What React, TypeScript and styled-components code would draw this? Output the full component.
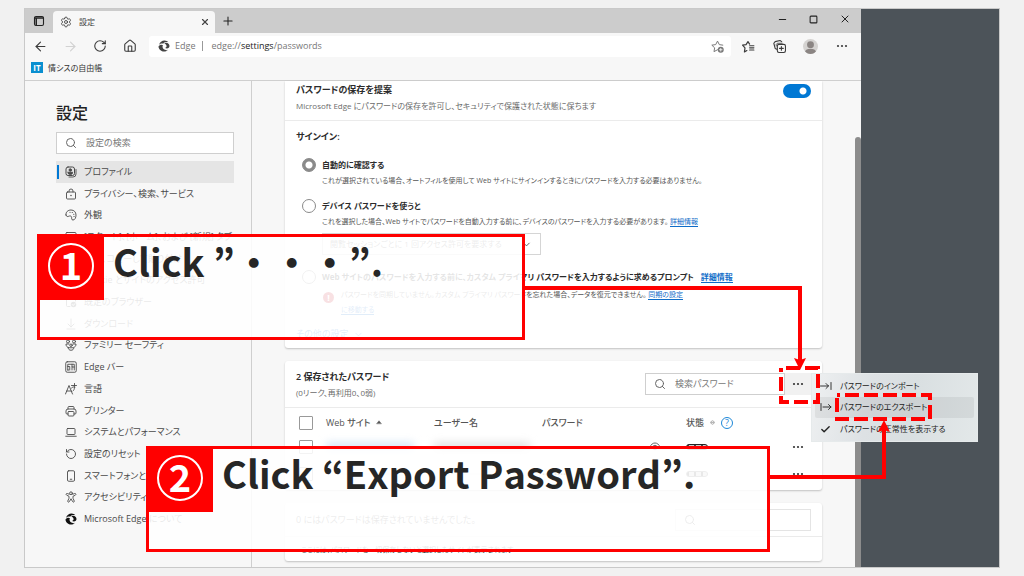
import React from "react";
import styled, { createGlobalStyle, css } from "styled-components";
import {
  ArrowLeft,
  ArrowRight,
  Check,
  ChevronDown,
  House,
  Minus,
  Plus,
  RotateCcw,
  RotateCw,
  Search,
  Settings,
  Square,
  X,
} from "lucide-react";

const GlobalStyle = createGlobalStyle`
  *, *::before, *::after { box-sizing: border-box; }
  body {
    margin: 0;
    background: #f1f1f1;
    color: #444;
    font: 9px/16px "Open Sans", "Noto Sans CJK JP", sans-serif;
    font-feature-settings: "palt";
  }
  button, input, select { font: inherit; font-feature-settings: inherit; color: inherit; }
  button { padding: 0; border: 0; background: none; }
  svg { display: block; flex: none; }
  h1, h2, p, ul { margin: 0; padding: 0; }
`;

const red = "#ff0000";

/* ---------- icons ---------- */

const Glyph = styled.svg.attrs({ viewBox: "0 0 24 24", "aria-hidden": true })<{ $size?: number }>`
  width: ${(p) => p.$size ?? 12}px;
  height: ${(p) => p.$size ?? 12}px;
  fill: none;
  stroke: currentColor;
  stroke-width: 1.8;
  stroke-linecap: round;
  stroke-linejoin: round;
`;

const EdgeLogo = ({ color = "#444" }: { color?: string }) => (
  <Glyph>
    <g fill={color} stroke="none">
      <path d="M2 10C3.500 4 8 1 13 1c3.500 0 6 1.500 7.500 3.500-5-1.500-9 0-10 3C7.500 6.500 4.500 7.500 2 10z" />
      <path d="M1 13c2-3.500 6-4.500 9-2.500C8 13 9 17.500 14 19.500c2 1 4 1 6 0C16 24 9 24.500 5 20.500 2.500 18.500 1 16 1 13z" />
      <path d="M12.500 6.500c5-3 10.500.5 10.500 5.500 0 4-4 6-9 4 3-1 4-3.500 2.500-6-1-1.800-2.500-2.800-4-3.500z" />
    </g>
  </Glyph>
);

const TabMenuIcon = () => (
  <Glyph>
    <rect x="3" y="3" width="18" height="18" rx="3" strokeWidth="2.200" />
    <path d="M3.500 6h17M6.500 8v12" strokeWidth="3" />
  </Glyph>
);

const StarAddIcon = () => (
  <Glyph $size={13}>
    <path d="M12 18l-6.500 3.500 1.300-7L1.500 9.500l7.200-1L12 2l3.300 6.500 6.500 1" />
    <circle cx="18" cy="18" r="5.500" fill="currentColor" stroke="none" />
    <path d="M18 15.500v5M15.500 18h5" stroke="#fff" strokeWidth="1.500" />
  </Glyph>
);

const FavoritesIcon = () => (
  <Glyph $size={13}>
    <path d="M9 19.500l-4.500 2.500 1-7.500L1 9.500l6.500-1L11 3l3 4.500" strokeWidth="2.200" />
    <path d="M14 10.500h8M14 14.500h8M14 18.500h8" strokeWidth="2" />
  </Glyph>
);

const CollectionsIcon = () => (
  <Glyph $size={13}>
    <path d="M7 17l-3-1.500L1.500 6 4 3l9-2 3 2" strokeWidth="2" />
    <path d="M6 11V8l2-2h9" strokeWidth="1.500" />
    <rect x="8" y="8" width="15" height="15" rx="3" strokeWidth="2" />
    <path d="M15.500 12v7M12 15.500h7" strokeWidth="2" />
  </Glyph>
);

const Dots = () => (
  <Glyph>
    <g fill="currentColor" stroke="none">
      <circle cx="4" cy="12" r="2.200" />
      <circle cx="12" cy="12" r="2.200" />
      <circle cx="20" cy="12" r="2.200" />
    </g>
  </Glyph>
);

const ProfileIcon = () => (
  <Glyph>
    <rect x="2" y="2" width="17" height="17" rx="4" strokeWidth="2" />
    <circle cx="10.500" cy="8" r="2.500" fill="currentColor" />
    <path d="M6 12.500h9v1.500a4.500 3 0 0 1-9 0z" fill="currentColor" />
    <path d="M22 7v9a6 6 0 0 1-6 6H8" />
  </Glyph>
);

const LockIcon = () => (
  <Glyph>
    <rect x="3" y="8" width="18" height="14" rx="2" />
    <path d="M8 8V6a4 4 0 0 1 8 0v2" />
    <circle cx="12" cy="15" r="1.500" fill="currentColor" stroke="none" />
  </Glyph>
);

const PaletteIcon = () => (
  <Glyph>
    <path d="M2 12C1 6 6 2 12 2c6 0 10 4 10 10 0 5-2 10-6 10-4 0-2-4-3-6.500-1-2-3.500-2-5.500-1C5 16 2.500 15 2 12z" />
    <path d="M10 6.500h.1M14.500 7h.1M17.500 10.500h.1M18 15h.1" strokeWidth="2.400" />
  </Glyph>
);

const StartIcon = () => (
  <Glyph>
    <rect x="2" y="3" width="20" height="18" rx="2" />
    <path d="M2 8h20M9 8v13" />
  </Glyph>
);

const ShareIcon = () => (
  <Glyph>
    <path d="M11 4H5a2 2 0 0 0-2 2v13a2 2 0 0 0 2 2h13a2 2 0 0 0 2-2v-4M8 15c1-5 5-7 9-7M14 3l6 5-6 5" />
  </Glyph>
);

const CookieIcon = () => (
  <Glyph>
    <rect x="2" y="3" width="20" height="18" rx="2" />
    <path d="M2 8h20M6 13h6M6 17h6M16 12v6" />
  </Glyph>
);

const BrowserIcon = () => (
  <Glyph>
    <path d="M10 21H5a2 2 0 0 1-2-2V5a2 2 0 0 1 2-2h14a2 2 0 0 1 2 2v5" />
    <circle cx="17" cy="17" r="5.500" fill="currentColor" stroke="none" />
    <path d="M14.500 17l2 2 3-3.500" stroke="#fff" />
  </Glyph>
);

const DownloadIcon = () => (
  <Glyph>
    <path d="M12 2v16M6 12l6 6 6-6M4 22h16" />
  </Glyph>
);

const FamilyIcon = () => (
  <Glyph>
    <circle cx="6" cy="5" r="3" />
    <circle cx="18" cy="5" r="3" />
    <circle cx="12" cy="12.500" r="2.500" />
    <path d="M8 10H2c0 4 1.500 6 4 6.500M16 10h6c0 4-1.500 6-4 6.500M6.500 17.500h11c0 3-2 5-5.500 5s-5.500-2-5.500-5z" />
  </Glyph>
);

const EdgeBarIcon = () => (
  <Glyph>
    <rect x="1.500" y="1.500" width="21" height="21" rx="3" />
    <path d="M5.500 18V6.500h13V18M9.500 18v-7h-4M14 6.500V12h4.500M14 12v6M5.500 18h2" />
  </Glyph>
);

const LanguageIcon = () => (
  <Glyph>
    <path d="M1 22L8 5l7 17M3.500 16h9M13 5h10M19 1v6c0 5-1 8-3 9M13 10c2-2 5-3 7-2" />
  </Glyph>
);

const PrinterIcon = () => (
  <Glyph>
    <path d="M6 8V5a2 2 0 0 1 2-2h8a2 2 0 0 1 2 2v3M6 18H4a2 2 0 0 1-2-2v-4a4 4 0 0 1 4-4h12a4 4 0 0 1 4 4v4a2 2 0 0 1-2 2h-2" />
    <rect x="6" y="13" width="12" height="9" rx="2" />
  </Glyph>
);

const LaptopIcon = () => (
  <Glyph>
    <rect x="4" y="5" width="16" height="12" rx="1.500" />
    <path d="M1.500 20.500h21" />
  </Glyph>
);

const PhoneIcon = () => (
  <Glyph>
    <rect x="5" y="1.500" width="14" height="21" rx="2.500" />
    <path d="M10.500 18.500h3" />
  </Glyph>
);

const AccessibilityIcon = () => (
  <Glyph>
    <circle cx="12" cy="4.500" r="2.800" />
    <path d="M8.500 6.500L4.500 5C2 4.500 1.500 7.500 3.500 8.500L8 10.500v4L5.500 20c-.5 2.500 2.500 3 3.300 1.200L12 15.500l3.200 5.700c.8 1.800 3.800 1.300 3.300-1.200L16 14.500v-4l4.500-2c2-1 1.500-4-1-3.500l-4 1.500" />
  </Glyph>
);

const EyeIcon = () => (
  <Glyph>
    <path d="M2 12C4 6.500 8 4 12 4s8 2.500 10 8" />
    <circle cx="12" cy="13" r="4.500" />
  </Glyph>
);

const ImportIcon = () => (
  <Glyph>
    <path d="M1 12h16M12 7l5 5-5 5M22 5v14" />
  </Glyph>
);

const ExportIcon = () => (
  <Glyph>
    <path d="M2 5v14M6 12h16M17 7l5 5-5 5" />
  </Glyph>
);

/* ---------- page frame ---------- */

const Page = styled.div`
  position: relative;
  min-height: 100vh;
  padding: 8px 24px;
  display: flex;
`;

const Frame = styled.div`
  flex: 1;
  min-width: 0;
  display: grid;
  grid-template-columns: minmax(0, 1fr) 138px;
  border: 1px solid #c9c9c9;
`;

const Desktop = styled.div`
  background: #4c5359;
`;

const BrowserWindow = styled.div`
  min-width: 0;
  display: flex;
  flex-direction: column;
  background: #f7f7f7;
`;

/* ---------- browser chrome ---------- */

const TabStrip = styled.div`
  height: 24px;
  display: flex;
  align-items: stretch;
  background: #cccccc;
`;

const TabStripButton = styled.button<{ $width: number }>`
  width: ${(p) => p.$width}px;
  display: grid;
  place-items: center;
  color: #222;
`;

const Tab = styled.div`
  width: 162px;
  margin-top: 2px;
  padding: 0 5px 0 7px;
  display: flex;
  align-items: center;
  gap: 7px;
  background: #f7f7f7;
  border-radius: 4px 4px 0 0;
  font-size: 8px;
`;

const TabTitle = styled.span`
  flex: 1;
`;

const WindowButtons = styled.div`
  margin-left: auto;
  padding: 0 1px 4px 0;
  display: flex;
  align-items: stretch;
`;

const Toolbar = styled.div`
  height: 26px;
  display: flex;
  align-items: center;
  color: #444;
`;

const ToolButton = styled.button<{ $dim?: boolean }>`
  width: 30px;
  height: 22px;
  display: grid;
  place-items: center;
  color: ${(p) => (p.$dim ? "#d2d2d2" : "#3c3c3c")};
`;

const NavButtons = styled.div`
  display: flex;
  margin-right: 4px;
`;

const Actions = styled.div`
  width: 130px;
  padding: 0 4px 0 2px;
  display: grid;
  grid-auto-flow: column;
  justify-items: center;
`;

const AddressBar = styled.div`
  flex: 1;
  min-width: 0;
  height: 21px;
  padding: 0 7px 0 9px;
  display: flex;
  align-items: center;
  background: #fff;
  border-radius: 3px;
  color: #777;
`;

const SiteName = styled.span`
  margin-left: 5px;
  padding-right: 7px;
  line-height: 10px;
  border-right: 1px solid #999;
`;

const Url = styled.div`
  flex: 1;
  padding-left: 8px;
  white-space: nowrap;
`;

const UrlHost = styled.span`
  color: #222;
`;

const Avatar = styled.span`
  width: 15px;
  height: 15px;
  border-radius: 50%;
  overflow: hidden;
  background: #d5d3d1;
  color: #8b8583;
`;

const Bookmarks = styled.nav`
  height: 22px;
  padding: 0 6px 4px;
  display: flex;
  align-items: center;
  border-bottom: 1px solid #cfcfcf;
`;

const Bookmark = styled.a`
  display: flex;
  align-items: center;
  gap: 5px;
  color: #333;
  font-size: 8px;
  text-decoration: none;
`;

const SiteBadge = styled.span`
  width: 12px;
  height: 11px;
  background: #0a8fd0;
  color: #fff;
  font: 700 8px/11px "Open Sans", sans-serif;
  text-align: center;
`;

/* ---------- settings layout ---------- */

const Content = styled.div`
  flex: 1;
  display: grid;
  grid-template-columns: 227px minmax(0, 1fr) 6px;
`;

const Sidebar = styled.aside`
  padding: 21px 17px 0 31px;
  border-right: 1px solid #cfcfcf;
`;

const SidebarTitle = styled.h1`
  color: #222;
  font-size: 16px;
  font-weight: 500;
  line-height: 22px;
`;

const SearchBox = styled.label<{ $width?: number; $faint?: boolean }>`
  width: ${(p) => (p.$width ? `${p.$width}px` : "auto")};
  height: 22px;
  padding: 0 8px;
  display: flex;
  align-items: center;
  gap: 9px;
  background: #fff;
  border: 1px solid ${(p) => (p.$faint ? "#e4e4e4" : "#cfcfcf")};
  color: #666;
`;

const SearchInput = styled.input`
  flex: 1;
  min-width: 0;
  padding: 0;
  border: 0;
  outline: 0;
  background: none;
  line-height: 16px;
  &::placeholder {
    color: #777;
    opacity: 1;
  }
`;

const SidebarSearch = styled.div`
  margin: 8px 0 7px;
`;

const SideNav = styled.nav`
  height: 369px;
  display: grid;
  grid-auto-rows: 1fr;
`;

const SideLink = styled.a<{ $active?: boolean }>`
  display: flex;
  align-items: center;
  gap: 7px;
  padding-left: 6px;
  border-left: 3px solid transparent;
  color: #4a4a4a;
  text-decoration: none;
  white-space: nowrap;
  overflow: hidden;
  ${(p) =>
    p.$active &&
    css`
      background: linear-gradient(#0078d4, #0078d4) 1px 50% / 2px 14px no-repeat border-box, #e5e5e5;
    `}
`;

const Main = styled.main`
  padding: 0 33px 6px;
  display: flex;
  flex-direction: column;
  gap: 13px;
`;

const ScrollThumb = styled.div`
  margin-top: 56px;
  background: #8c8c8c;
  border-radius: 3px 3px 0 0;
`;

const Card = styled.section<{ $clipped?: boolean }>`
  background: #fff;
  border-radius: ${(p) => (p.$clipped ? "0 0 3px 3px" : "3px")};
  box-shadow: 0 1px 2px rgba(0, 0, 0, 0.22);
`;

const CardHead = styled.div<{ $height: number; $raised?: boolean }>`
  height: ${(p) => p.$height}px;
  padding: 0 11px ${(p) => (p.$raised ? 6 : 0)}px;
  display: flex;
  align-items: center;
  justify-content: space-between;
  border-bottom: 1px solid #ebebeb;
`;

const HeadText = styled.div`
  flex: 1;
`;

const Title = styled.h2<{ $light?: boolean }>`
  color: ${(p) => (p.$light ? "#666" : "#2b2b2b")};
  font-size: 9px;
  font-weight: ${(p) => (p.$light ? 400 : 600)};
  line-height: 16px;
  white-space: nowrap;
`;

const Note = styled.p<{ $small?: boolean }>`
  color: ${(p) => (p.$small ? "#555" : "#6b6b6b")};
  font-size: ${(p) => (p.$small ? 7 : 8)}px;
  line-height: 15px;
  white-space: nowrap;
`;

const Link = styled.a`
  color: #0f6cc8;
  text-decoration: none;
  border-bottom: 1px solid #0f6cc8;
`;

const Switch = styled.input.attrs({ type: "checkbox", role: "switch" })`
  appearance: none;
  width: 28px;
  height: 14px;
  margin: 0 0 14px;
  border-radius: 7px;
  background: radial-gradient(circle at 20px 7px, #fff 3px, transparent 4px), #0078d4;
`;

const SignIn = styled.div`
  padding: 8px 11px 6px;
  display: flex;
  flex-direction: column;
`;

const Option = styled.div<{ $gap: number }>`
  margin-top: ${(p) => p.$gap}px;
  padding-left: 6px;
  display: grid;
  grid-template-columns: 14px minmax(0, 1fr);
  column-gap: 6px;
`;

const Radio = styled.input.attrs({ type: "radio" })`
  appearance: none;
  width: 14px;
  height: 14px;
  margin: 1px 0;
  border: 1px solid #8a8a8a;
  border-radius: 50%;
  background: #fff;
  &:checked {
    border-color: #8a8a8a;
    background: radial-gradient(circle, #fff 3px, #8a8a8a 4px);
  }
`;

const OptionTitle = styled.label`
  color: #2b2b2b;
  font-size: 8px;
  font-weight: 700;
  white-space: nowrap;
`;

const OptionBody = styled.div`
  grid-column: 2;
`;

const LinkGap = styled.span`
  margin-left: 7px;
`;

const SelectWrap = styled.div`
  width: 219px;
  margin-top: 4px;
  display: grid;
  grid-template-columns: 1fr 19px;
  align-items: center;
  border: 1px solid #d5d5d5;
  background: #fff;
`;

const Select = styled.select`
  grid-area: 1 / 1 / 2 / 3;
  appearance: none;
  width: 100%;
  height: 20px;
  padding: 0 7px;
  border: 0;
  background: none;
  color: #666;
  font-size: 8px;
`;

const SelectArrow = styled.span`
  grid-area: 1 / 2;
  pointer-events: none;
`;

const Warning = styled.div`
  padding: 2px 0 0 1px;
  display: grid;
  grid-template-columns: 11px 1fr;
  gap: 7px;
`;

const WarningMark = styled.span`
  width: 11px;
  height: 11px;
  margin-top: 5px;
  border-radius: 50%;
  background: #c50f1f;
  color: #fff;
  font-weight: 700;
  line-height: 11px;
  text-align: center;
`;

const MoreSettings = styled.button`
  margin-top: 9px;
  display: flex;
  align-items: center;
  gap: 5px;
  color: #0f6cc8;
`;

const MoreButton = styled.button<{ $filled?: boolean }>`
  width: 26px;
  height: 22px;
  display: grid;
  place-items: center;
  background: ${(p) => (p.$filled ? "#f1f1f1" : "none")};
  color: #333;
`;

const Table = styled.table`
  width: 100%;
  table-layout: fixed;
  border-collapse: collapse;
  color: #555;
`;

const HeadCell = styled.th<{ $width?: number }>`
  width: ${(p) => (p.$width ? `${p.$width}px` : "auto")};
  height: 25px;
  padding: 4px 0 0;
  font-weight: 500;
  text-align: left;
  white-space: nowrap;
`;

const Cell = styled.td`
  height: 27px;
  padding: 0;
  white-space: nowrap;
`;

const TableWrap = styled.div`
  padding-bottom: 3px;
`;

const CheckBox = styled.input.attrs({ type: "checkbox" })`
  appearance: none;
  display: block;
  width: 14px;
  height: 14px;
  margin: 0 0 0 14px;
  border: 1px solid #999;
  border-radius: 1px;
  background: #fff;
`;

const Inline = styled.span<{ $gap: number }>`
  display: flex;
  align-items: center;
  gap: ${(p) => p.$gap}px;
`;

const Help = styled.button`
  width: 12px;
  height: 12px;
  border: 1px solid #1e88d8;
  border-radius: 50%;
  color: #1e88d8;
  font-size: 9px;
  line-height: 10px;
`;

const Smudge = styled.span<{ $color: string; $width: number }>`
  display: block;
  width: ${(p) => p.$width}px;
  height: 8px;
  background: ${(p) => p.$color};
  filter: blur(4px);
`;

const Masked = styled.span`
  display: block;
  width: 88px;
  font-size: 8px;
`;

const Strength = styled.span<{ $dark?: boolean }>`
  width: 22px;
  height: 6px;
  display: block;
  border: 1px solid ${(p) => (p.$dark ? "#222" : "#777")};
  border-radius: 3px;
  background: repeating-linear-gradient(90deg, #444 0 2px, #ccc 2px 7px);
`;

const EmptyNote = styled.p`
  padding: 4px 16px 3px;
  color: #333;
  font-size: 7px;
  line-height: 17px;
`;

/* ---------- drop-down menu ---------- */

const Menu = styled.ul`
  position: absolute;
  top: 373px;
  right: 46px;
  width: 167px;
  height: 69px;
  padding: 1px 3px;
  display: grid;
  grid-auto-rows: 1fr;
  list-style: none;
  background: linear-gradient(100deg, #eef0f1 0, #dde1e4 35%, #d9dfe1 60%, #e3e8e9 100%);
  border: 1px solid #e6eaeb;
`;

const MenuItem = styled.button<{ $active?: boolean }>`
  width: 100%;
  height: 100%;
  padding-left: 5px;
  display: grid;
  grid-template-columns: 13px 1fr;
  gap: 7px;
  align-items: center;
  color: #222;
  font-size: 8px;
  text-align: left;
  white-space: nowrap;
  border-radius: 2px;
  background: ${(p) => (p.$active ? "rgba(0, 0, 0, 0.06)" : "none")};
`;

/* ---------- annotations ---------- */

const Callout = styled.section<{ $left: number; $top: number; $width: number }>`
  position: absolute;
  left: ${(p) => p.$left}px;
  top: ${(p) => p.$top}px;
  width: ${(p) => p.$width}px;
  height: 106px;
  display: flex;
  align-items: flex-start;
  gap: 9px;
  border: 3px solid ${red};
  background: rgba(255, 255, 255, 0.88);
`;

const Badge = styled.div`
  width: 64px;
  height: 63px;
  padding: 0 2px 6px 0;
  display: grid;
  place-items: center;
  background: ${red};
`;

const StepNumber = styled.span`
  width: 46px;
  height: 46px;
  border: 2px solid #fff;
  border-radius: 50%;
  color: #fff;
  font: 700 38px/38px "Noto Sans CJK JP", sans-serif;
  text-align: center;
`;

const CalloutText = styled.p`
  color: #262626;
  font: 700 38px/48px "Noto Sans CJK JP", sans-serif;
  font-feature-settings: normal;
  font-kerning: none;
  white-space: nowrap;
`;

const ConnectorDown = styled.div`
  position: absolute;
  left: 525px;
  right: 222px;
  top: 286px;
  height: 74px;
  border: solid ${red};
  border-width: 4px 4px 0 0;
`;

const ConnectorUp = styled.div`
  position: absolute;
  left: 770px;
  right: 138px;
  top: 430px;
  height: 49px;
  border: solid ${red};
  border-width: 0 4px 4px 0;
`;

const ArrowHead = styled.svg<{ $right: number; $top: number }>`
  position: absolute;
  right: ${(p) => p.$right}px;
  top: ${(p) => p.$top}px;
  width: 12px;
  height: 12px;
  fill: ${red};
`;

const Marker = styled.svg<{ $right: number; $top: number; $w: number; $h: number }>`
  position: absolute;
  right: ${(p) => p.$right}px;
  top: ${(p) => p.$top}px;
  width: ${(p) => p.$w}px;
  height: ${(p) => p.$h}px;
  fill: none;
  stroke: ${red};
  stroke-width: 4;
  pointer-events: none;
`;

const sections: { label: string; icon: React.ReactNode }[] = [
  { label: "プロファイル", icon: <ProfileIcon /> },
  { label: "プライバシー、検索、サービス", icon: <LockIcon /> },
  { label: "外観", icon: <PaletteIcon /> },
  { label: "[スタート]、[ホーム]、および [新規] タブ", icon: <StartIcon /> },
  { label: "共有、コピーして貼り付け", icon: <ShareIcon /> },
  { label: "Cookie とサイトのアクセス許可", icon: <CookieIcon /> },
  { label: "既定のブラウザー", icon: <BrowserIcon /> },
  { label: "ダウンロード", icon: <DownloadIcon /> },
  { label: "ファミリー セーフティ", icon: <FamilyIcon /> },
  { label: "Edge バー", icon: <EdgeBarIcon /> },
  { label: "言語", icon: <LanguageIcon /> },
  { label: "プリンター", icon: <PrinterIcon /> },
  { label: "システムとパフォーマンス", icon: <LaptopIcon /> },
  { label: "設定のリセット", icon: <RotateCcw size={12} strokeWidth={1.8} /> },
  { label: "スマートフォンとその他のデバイス", icon: <PhoneIcon /> },
  { label: "アクセシビリティ", icon: <AccessibilityIcon /> },
  { label: "Microsoft Edge について", icon: <EdgeLogo color="#111" /> },
];

const logins = [
  { id: 1, site: "#cfe0f3", user: "#dcdcdc", dark: true },
  { id: 2, site: "#f3f3f3", user: "#f3f3f3", dark: false },
];

const BrowserChrome = () => (
  <>
    <TabStrip>
      <TabStripButton $width={28} aria-label="タブ操作メニュー">
        <TabMenuIcon />
      </TabStripButton>
      <Tab>
        <Settings size={12} strokeWidth={1.8} />
        <TabTitle>設定</TabTitle>
        <button aria-label="タブを閉じる">
          <X size={10} strokeWidth={2.8} />
        </button>
      </Tab>
      <TabStripButton $width={25} aria-label="新しいタブ">
        <Plus size={14} strokeWidth={1.8} />
      </TabStripButton>
      <WindowButtons>
        <TabStripButton $width={31} aria-label="最小化">
          <Minus size={11} strokeWidth={2.2} />
        </TabStripButton>
        <TabStripButton $width={31} aria-label="最大化">
          <Square size={9} strokeWidth={2.8} />
        </TabStripButton>
        <TabStripButton $width={31} aria-label="閉じる">
          <X size={12} strokeWidth={2} />
        </TabStripButton>
      </WindowButtons>
    </TabStrip>
    <Toolbar>
      <NavButtons>
        <ToolButton aria-label="戻る">
          <ArrowLeft size={15} strokeWidth={1.8} />
        </ToolButton>
        <ToolButton $dim aria-label="進む">
          <ArrowRight size={15} strokeWidth={1.8} />
        </ToolButton>
        <ToolButton aria-label="更新">
          <RotateCw size={14} strokeWidth={1.9} />
        </ToolButton>
        <ToolButton aria-label="ホーム">
          <House size={14} strokeWidth={1.9} />
        </ToolButton>
      </NavButtons>
      <AddressBar>
        <EdgeLogo />
        <SiteName>Edge</SiteName>
        <Url role="textbox" aria-label="アドレス バー" contentEditable suppressContentEditableWarning>
          edge://<UrlHost>settings</UrlHost>/passwords
        </Url>
        <button aria-label="お気に入りに追加">
          <StarAddIcon />
        </button>
      </AddressBar>
      <Actions>
        <ToolButton aria-label="お気に入り">
          <FavoritesIcon />
        </ToolButton>
        <ToolButton aria-label="コレクション">
          <CollectionsIcon />
        </ToolButton>
        <ToolButton aria-label="個人">
          <Avatar>
            <Glyph $size={15}>
              <g fill="currentColor" stroke="none">
                <circle cx="12" cy="9" r="5.500" />
                <ellipse cx="12" cy="20" rx="8.500" ry="4.500" />
              </g>
            </Glyph>
          </Avatar>
        </ToolButton>
        <ToolButton aria-label="設定など">
          <Dots />
        </ToolButton>
      </Actions>
    </Toolbar>
    <Bookmarks>
      <Bookmark href="#bookmark">
        <SiteBadge>IT</SiteBadge>
        情シスの自由帳
      </Bookmark>
    </Bookmarks>
  </>
);

const SavePasswordCard = () => (
  <Card $clipped>
    <CardHead $height={40} $raised>
      <HeadText>
        <Title as="label" htmlFor="offer-save">
          パスワードの保存を提案
        </Title>
        <Note>Microsoft Edge にパスワードの保存を許可し、セキュリティで保護された状態に保ちます</Note>
      </HeadText>
      <Switch id="offer-save" defaultChecked />
    </CardHead>
    <SignIn role="radiogroup" aria-labelledby="signin">
      <Title id="signin">サインイン:</Title>
      <Option $gap={12}>
        <Radio id="auto" name="signin" defaultChecked />
        <OptionTitle htmlFor="auto">自動的に確認する</OptionTitle>
        <OptionBody>
          <Note $small>
            これが選択されている場合、オートフィルを使用して Web サイトにサインインするときにパスワードを入力する必要はありません。
          </Note>
        </OptionBody>
      </Option>
      <Option $gap={10}>
        <Radio id="device" name="signin" />
        <OptionTitle htmlFor="device">デバイス パスワードを使うと</OptionTitle>
        <OptionBody>
          <Note $small>
            これを選択した場合、Web サイトでパスワードを自動入力する前に、デバイスのパスワードを入力する必要があります。{" "}
            <Link href="#device">詳細情報</Link>
          </Note>
          <SelectWrap>
            <Select aria-label="アクセス許可の要求">
              <option>閲覧セッションごとに 1 回アクセス許可を要求する</option>
            </Select>
            <SelectArrow>
              <ChevronDown size={11} strokeWidth={1.8} />
            </SelectArrow>
          </SelectWrap>
        </OptionBody>
      </Option>
      <Option $gap={14}>
        <Radio id="custom" name="signin" />
        <OptionTitle htmlFor="custom">
          Web サイトのパスワードを入力する前に、カスタム プライマリ パスワードを入力するように求めるプロンプト
          <LinkGap>
            <Link href="#custom">詳細情報</Link>
          </LinkGap>
        </OptionTitle>
        <OptionBody>
          <Warning>
            <WarningMark>!</WarningMark>
            <Note $small>
              パスワードを同期していません。カスタム プライマリ パスワードを忘れた場合、データを復元できません。{" "}
              <Link href="#sync">
                同期の設定
                <br />
                に移動する
              </Link>
            </Note>
          </Warning>
        </OptionBody>
      </Option>
      <MoreSettings>
        その他の設定
        <ChevronDown size={11} strokeWidth={1.8} />
      </MoreSettings>
    </SignIn>
  </Card>
);

const SavedPasswordsCard = () => (
  <Card>
    <CardHead $height={47}>
      <HeadText>
        <Title>2 保存されたパスワード</Title>
        <Note>(0リーク、再利用0、0弱)</Note>
      </HeadText>
      <SearchBox $width={140}>
        <Search size={12} strokeWidth={2} />
        <SearchInput placeholder="検索パスワード" aria-label="検索パスワード" />
      </SearchBox>
      <MoreButton $filled aria-label="その他のアクション">
        <Dots />
      </MoreButton>
    </CardHead>
    <TableWrap>
      <Table>
        <thead>
          <tr>
            <HeadCell $width={41}>
              <CheckBox aria-label="すべて選択" />
            </HeadCell>
            <HeadCell $width={108} scope="col">
              <Inline $gap={5}>
                Web サイト
                <Glyph $size={6}>
                  <path d="M3 14L12 3l9 11z" fill="currentColor" />
                </Glyph>
              </Inline>
            </HeadCell>
            <HeadCell $width={108} scope="col">
              ユーザー名
            </HeadCell>
            <HeadCell scope="col">パスワード</HeadCell>
            <HeadCell $width={99} scope="col">
              <Inline $gap={6}>
                状態
                <Glyph $size={5}>
                  <path d="M4 9l8-7 8 7zM4 15l8 7 8-7z" />
                </Glyph>
                <Help aria-label="ヘルプ">?</Help>
              </Inline>
            </HeadCell>
            <HeadCell $width={37} />
          </tr>
        </thead>
        <tbody>
          {logins.map((l) => (
            <tr key={l.id}>
              <Cell>
                <CheckBox aria-label={`パスワード ${l.id} を選択`} />
              </Cell>
              <Cell>
                <Smudge $color={l.site} $width={88} />
              </Cell>
              <Cell>
                <Smudge $color={l.user} $width={96} />
              </Cell>
              <Cell>
                <Inline $gap={19}>
                  <Masked>••••••••••</Masked>
                  <button aria-label="パスワードを表示">
                    <EyeIcon />
                  </button>
                </Inline>
              </Cell>
              <Cell>
                <Strength $dark={l.dark} />
              </Cell>
              <Cell>
                <MoreButton aria-label="その他のアクション">
                  <Dots />
                </MoreButton>
              </Cell>
            </tr>
          ))}
        </tbody>
      </Table>
    </TableWrap>
  </Card>
);

const NeverSavedCard = () => (
  <Card>
    <CardHead $height={34}>
      <Title $light>0 にはパスワードは保存されていませんでした。</Title>
      <SearchBox $width={136} $faint>
        <Search size={12} strokeWidth={2} />
        <SearchInput aria-label="保存しないサイトの検索" />
      </SearchBox>
    </CardHead>
    <EmptyNote>ここには、パスワードを一切保存しないと選択したサイトが表示されます</EmptyNote>
  </Card>
);

export default function App() {
  return (
    <Page>
      <GlobalStyle />
      <Frame>
        <BrowserWindow>
          <BrowserChrome />
          <Content>
            <Sidebar>
              <SidebarTitle>設定</SidebarTitle>
              <SidebarSearch>
                <SearchBox>
                  <Search size={12} strokeWidth={2} />
                  <SearchInput placeholder="設定の検索" aria-label="設定の検索" />
                </SearchBox>
              </SidebarSearch>
              <SideNav aria-label="設定">
                {sections.map((s, i) => (
                  <SideLink key={s.label} href="#section" $active={i === 0}>
                    {s.icon}
                    {s.label}
                  </SideLink>
                ))}
              </SideNav>
            </Sidebar>
            <Main>
              <SavePasswordCard />
              <SavedPasswordsCard />
              <NeverSavedCard />
            </Main>
            <ScrollThumb />
          </Content>
        </BrowserWindow>
        <Desktop />
      </Frame>

      <Menu>
        <li>
          <MenuItem>
            <ImportIcon />
            パスワードのインポート
          </MenuItem>
        </li>
        <li>
          <MenuItem $active>
            <ExportIcon />
            パスワードのエクスポート
          </MenuItem>
        </li>
        <li>
          <MenuItem>
            <Check size={11} strokeWidth={3} />
            パスワードの正常性を表示する
          </MenuItem>
        </li>
      </Menu>

      <Callout $left={37} $top={234} $width={488}>
        <Badge>
          <StepNumber>1</StepNumber>
        </Badge>
        <CalloutText>Click ”・・・”.</CalloutText>
      </Callout>
      <Callout $left={146} $top={446} $width={624}>
        <Badge>
          <StepNumber>2</StepNumber>
        </Badge>
        <CalloutText>Click “Export Password”.</CalloutText>
      </Callout>

      <ConnectorDown />
      <ArrowHead $right={218} $top={358} viewBox="0 0 12 12">
        <path d="M0 0l6 2 6-2-6 12z" />
      </ArrowHead>
      <Marker $right={204} $top={366} $w={41} $h={38}>
        <rect x="2" y="2" width="37" height="34" strokeDasharray="14 5" strokeDashoffset="-5" />
      </Marker>
      <ConnectorUp />
      <ArrowHead $right={134} $top={420} viewBox="0 0 12 12">
        <path d="M0 12l6-2 6 2-6-12z" />
      </ArrowHead>
      <Marker $right={92} $top={393} $w={97} $h={28}>
        <rect x="2" y="2" width="93" height="24" strokeDasharray="14 5" strokeDashoffset="-8" />
      </Marker>
    </Page>
  );
}
